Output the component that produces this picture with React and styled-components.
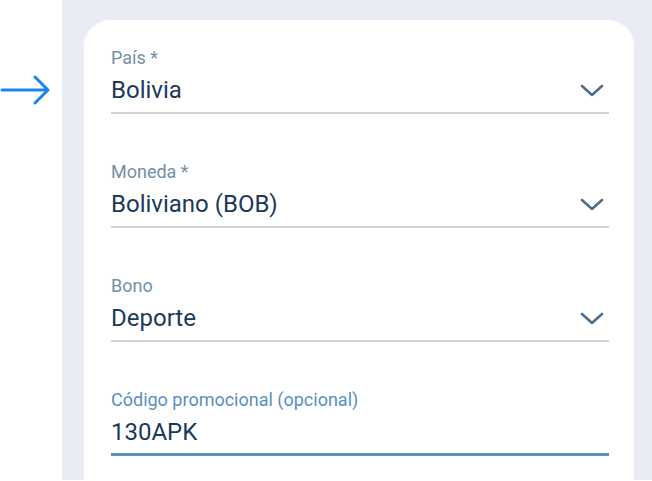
import React from 'react'
import styled, { createGlobalStyle } from 'styled-components'

const GlobalStyle = createGlobalStyle`
  html, body {
    margin: 0;
    padding: 0;
    background: #fff;
    font-family: Roboto, "Liberation Sans", sans-serif;
  }
`

const Page = styled.div`
  display: flex;
  width: 652px;
  height: 481px;
  overflow: hidden;
`

const Gutter = styled.div`
  width: 62px;
  flex-shrink: 0;
  padding-top: 74px;
  box-sizing: border-box;
`

const Panel = styled.div`
  flex: 1;
  background: #e9edf3;
  padding: 20px 18px 0 22px;
  height: 480px;
  box-sizing: border-box;
`

const Card = styled.div`
  background: #fff;
  border-radius: 26px 26px 0 0;
  padding: 27px 25px 0 27px;
  height: 100%;
  box-sizing: border-box;
`

const Field = styled.div`
  margin-bottom: 47px;
  border-bottom: ${p => (p.active ? '3px solid #5a8fc5' : '2px solid #c9d4db')};
  padding-bottom: ${p => (p.active ? '5px' : '6px')};
`

const Label = styled.div`
  font-size: 18px;
  line-height: 21px;
  color: ${p => (p.active ? '#5b8ec4' : '#7190a8')};
`

const Row = styled.div`
  display: flex;
  align-items: center;
  justify-content: space-between;
  margin-top: 7px;
`

const Value = styled.div`
  font-size: 24px;
  line-height: 31px;
  color: #1b3a5b;
`

const Chevron = () => (
  <svg width="26" height="16" viewBox="0 0 26 16" style={{ marginRight: 4 }}>
    <path d="M3 3 L13 12 L23 3" fill="none" stroke="#4a6f8e" strokeWidth="2.6" strokeLinecap="round" strokeLinejoin="round" />
  </svg>
)

const Arrow = () => (
  <svg width="52" height="32" viewBox="0 0 52 32">
    <path d="M2 16 H48 M35 3 L48 16 L35 29" fill="none" stroke="#1a84e8" strokeWidth="3" strokeLinecap="round" strokeLinejoin="round" />
  </svg>
)

const fields = [
  { label: 'País *', value: 'Bolivia', select: true },
  { label: 'Moneda *', value: 'Boliviano (BOB)', select: true },
  { label: 'Bono', value: 'Deporte', select: true },
  { label: 'Código promocional (opcional)', value: '130APK', active: true },
]

export default function App() {
  return (
    <>
      <GlobalStyle />
      <Page>
        <Gutter>
          <Arrow />
        </Gutter>
        <Panel>
          <Card>
            {fields.map((f, i) => (
              <Field key={i} active={f.active}>
                <Label active={f.active}>{f.label}</Label>
                <Row>
                  <Value>{f.value}</Value>
                  {f.select && <Chevron />}
                </Row>
              </Field>
            ))}
          </Card>
        </Panel>
      </Page>
    </>
  )
}
